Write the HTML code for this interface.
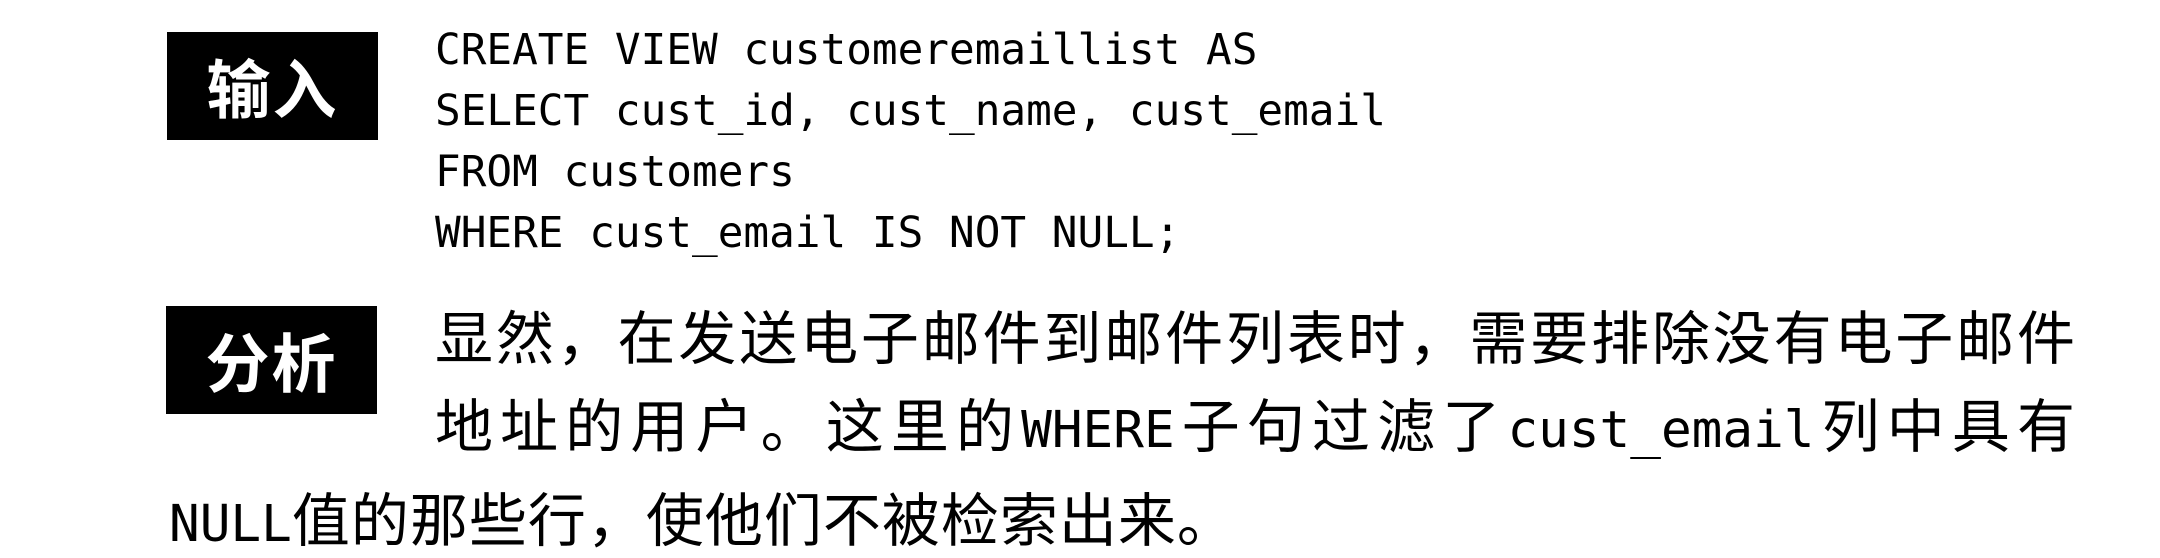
<!DOCTYPE html>
<html><head><meta charset="utf-8"><style>
html,body{margin:0;padding:0;background:#fff;}
body{width:2160px;height:555px;position:relative;overflow:hidden;}
.box{position:absolute;background:#000;color:#fff;width:211px;height:108px;font:bold 64px "Liberation Sans","Noto Sans CJK SC",sans-serif;display:flex;align-items:center;justify-content:center;letter-spacing:2px;}
.code{position:absolute;left:435px;font:42.7px "DejaVu Sans Mono","Liberation Mono",monospace;color:#000;white-space:pre;line-height:61px;top:20px;}
.t{position:absolute;font:58px "Liberation Sans","Noto Sans CJK SC",sans-serif;color:#000;white-space:nowrap;letter-spacing:1px;}
.j{width:1640px;text-align:justify;text-align-last:justify;white-space:normal;letter-spacing:0;}
.m{font-family:"DejaVu Sans Mono","Liberation Mono",monospace;font-size:51px;letter-spacing:0;}
</style></head><body>
<div class="box" style="left:167px;top:32px;">输入</div>
<div class="code">CREATE VIEW customeremaillist AS
SELECT cust_id, cust_name, cust_email
FROM customers
WHERE cust_email IS NOT NULL;</div>
<div class="box" style="left:166px;top:306px;">分析</div>
<div class="t j" style="left:435px;top:292px;">显然，在发送电子邮件到邮件列表时，需要排除没有电子邮件</div>
<div class="t j" style="left:435px;top:380px;">地址的用户。这里的<span class="m">WHERE</span>子句过滤了<span class="m">cust_email</span>列中具有</div>
<div class="t" style="left:169px;top:474px;"><span class="m">NULL</span>值的那些行，使他们不被检索出来。</div>
</body></html>
